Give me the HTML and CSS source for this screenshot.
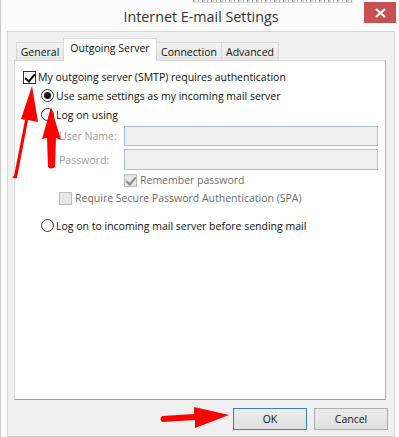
FILE: index.html
```html
<!DOCTYPE html>
<html lang="en">
<head>
    <meta charset="UTF-8">
    <title>Internet E-mail Settings</title>
    <link rel="stylesheet" href="styles.css">
</head>
<body>
    <div class="window">
        <div class="behind"></div>
        <div class="titlebar">
            <span class="title">Internet E-mail Settings</span>
            <div class="close">
                <svg width="11" height="10" viewBox="0 0 11 10">
                    <path d="M1 1 L10 9 M10 1 L1 9" stroke="#fff" stroke-width="2.2" fill="none"/>
                </svg>
            </div>
        </div>

        <div class="client">
            <div class="tabs">
                <div class="tab tab-general">General</div>
                <div class="tab tab-outgoing active">Outgoing Server</div>
                <div class="tab tab-connection">Connection</div>
                <div class="tab tab-advanced">Advanced</div>
            </div>

            <div class="panel">
                <div class="row row-auth">
                    <span class="box checked"></span>
                    <span>My outgoing server (SMTP) requires authentication</span>
                </div>
                <div class="row row-radio">
                    <span class="radio selected"></span>
                    <span>Use same settings as my incoming mail server</span>
                </div>
                <div class="row row-radio">
                    <span class="radio"></span>
                    <span>Log on using</span>
                </div>
                <div class="field field-user">
                    <label>User Name:</label>
                    <div class="input"></div>
                </div>
                <div class="field field-pass">
                    <label>Password:</label>
                    <div class="input"></div>
                </div>
                <div class="row row-remember disabled">
                    <span class="box grey checked"></span>
                    <span>Remember password</span>
                </div>
                <div class="row row-spa disabled">
                    <span class="box grey"></span>
                    <span>Require Secure Password Authentication (SPA)</span>
                </div>
                <div class="row row-radio row-last">
                    <span class="radio"></span>
                    <span>Log on to incoming mail server before sending mail</span>
                </div>
            </div>

            <div class="buttons">
                <div class="btn default">OK</div>
                <div class="btn">Cancel</div>
            </div>
        </div>

        <!-- red annotation arrows drawn over the dialog -->
        <svg class="arrows" width="399" height="437" viewBox="0 0 399 437">
            <g fill="#ff0000">
                <path d="M11 177 Q13 179 16 178 L27 120 L37 122 L31 86 L20 119 L24 120 L13 176 Z"/>
                <path d="M47 167 Q50 170 54 167 L55 138 L60 140 L50 107 L41 139 L46 138 Z"/>
                <path d="M161 416 Q158 419 161 422 L194 420 L194 428 L228 415 L193 407 L193 414 Z"/>
            </g>
        </svg>
    </div>
</body>
</html>
```

FILE: styles.css
```css
* {
    box-sizing: border-box;
}
body {
    margin: 0;
    background-color: #fafafa;
    font-family: "Open Sans", "Noto Sans", sans-serif;
    font-size: 10.5px;
    color: #111;
}
.window {
    position: relative;
    width: 399px;
    height: 437px;
    background-color: #fbfbfb;
    border-left: 1px solid #c9c9c9;
    overflow: hidden;
}
/* bottom edge of the window behind the dialog */
.behind {
    height: 3px;
    margin-left: 192px;
    width: 160px;
    border-bottom: 1px solid #d0d0d0;
    background: repeating-linear-gradient(90deg, #5a5a5a 0 1px, #c8c8c8 1px 3px, #fbfbfb 3px 5px, #8a8a8a 5px 6px, #fbfbfb 6px 9px);
    opacity: 0.7;
}
.titlebar {
    height: 28px;
    text-align: center;
}
.title {
    display: block;
    padding-top: 4px;
    padding-left: 2px;
    font-size: 14.3px;
    line-height: 20px;
    color: #333;
}
.close {
    position: absolute;
    top: 2px;
    left: 363px;
    width: 32px;
    height: 21px;
    background-color: #c75050;
    display: flex;
    align-items: center;
    justify-content: center;
}
.client {
    margin-left: 6px;
    width: 388px;
    height: 406px;
    background-color: #f0f0f0;
    border: 1px solid #d4d4d4;
}
.tabs {
    display: flex;
    align-items: flex-end;
    height: 28px;
    padding-left: 7px;
}
.tab {
    height: 18px;
    border: 1px solid #d9d9d9;
    border-bottom: none;
    background: linear-gradient(#f2f2f2, #e6e6e6);
    line-height: 18px;
    text-align: center;
    color: #111;
}
.tab-general {
    width: 48px;
    margin-left: 1px;
}
.tab-outgoing {
    width: 94px;
}
.tab-connection {
    width: 66px;
    margin-left: -1px;
}
.tab-advanced {
    width: 58px;
    margin-left: -1px;
}
.tab.active {
    height: 23px;
    margin-left: -1px;
    margin-bottom: -1px;
    background: #fff;
    line-height: 18px;
    position: relative;
    z-index: 1;
}
.panel {
    margin-left: 6px;
    width: 372px;
    height: 340px;
    background-color: #fff;
    border: 1px solid #d9d9d9;
    border-right-color: #adadad;
    border-bottom-color: #a0a0a0;
    padding-top: 7px;
}
.row {
    display: flex;
    align-items: center;
    height: 18px;
    gap: 2px;
}
.row-auth {
    padding-left: 8px;
}
.row-radio {
    height: 19px;
    padding-left: 26px;
}
.row-last {
    margin-top: 9px;
}
.row-remember {
    margin-top: 1px;
    padding-left: 109px;
    gap: 3px;
}
.row-spa {
    padding-left: 44px;
    gap: 3px;
}
.disabled {
    color: #6d6d6d;
}
.box {
    width: 13px;
    height: 13px;
    border: 1px solid #333;
    background: #fff;
    position: relative;
}
.box.grey {
    border-color: #bcbcbc;
    background: #e6e6e6;
}
.box.checked::after {
    content: "";
    position: absolute;
    left: 3px;
    top: 0px;
    width: 4px;
    height: 8px;
    border-right: 2px solid #000;
    border-bottom: 2px solid #000;
    transform: rotate(40deg);
}
.box.grey.checked::after {
    border-color: #8c8c8c;
}
.radio {
    width: 13px;
    height: 13px;
    border: 1px solid #333;
    border-radius: 50%;
    background: #fff;
    position: relative;
}
.radio.selected::after {
    content: "";
    position: absolute;
    left: 2px;
    top: 2px;
    width: 7px;
    height: 7px;
    border-radius: 50%;
    background: #111;
}
.field {
    display: flex;
    align-items: center;
    padding-left: 44px;
}
.field label {
    width: 65px;
    color: #a0a0a0;
}
.field-user {
    margin-top: 2px;
    height: 20px;
}
.field-pass {
    margin-top: 3px;
    height: 21px;
}
.input {
    width: 254px;
    height: 100%;
    background: #f0f0f0;
    border: 1px solid #a9bfd6;
}
.buttons {
    display: flex;
    justify-content: flex-end;
    gap: 7px;
    margin-top: 8px;
    padding-right: 6px;
}
.btn {
    width: 74px;
    height: 22px;
    border: 1px solid #acacac;
    background: linear-gradient(#ececec, #e0e0e0);
    text-align: center;
    line-height: 20px;
    color: #111;
}
.btn.default {
    border-color: #3c7fb1;
}
.arrows {
    position: absolute;
    left: 0;
    top: 0;
}
```
